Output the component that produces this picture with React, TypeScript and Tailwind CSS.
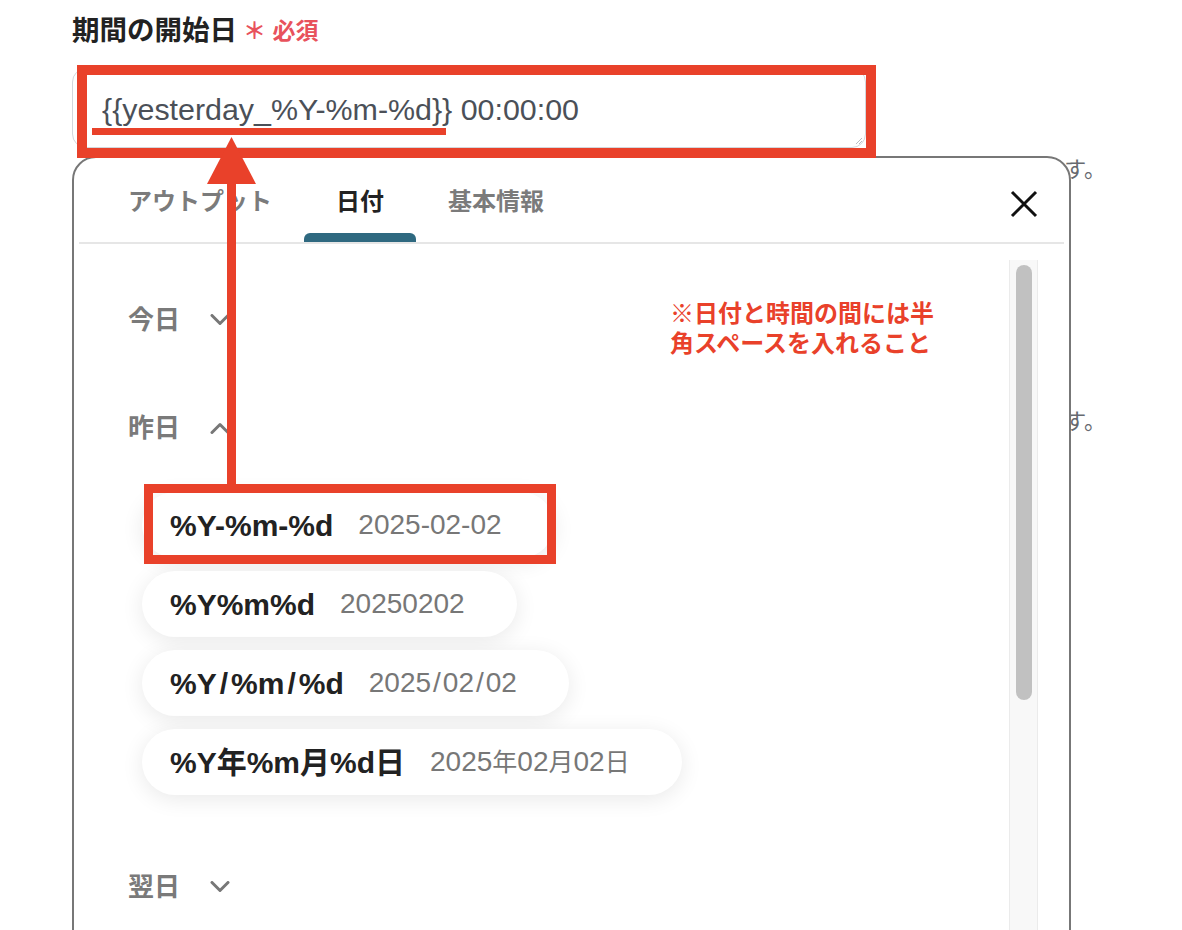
import React from 'react';

const RED = '#e9412a';

const Slash = ({ w }: { w: string }) => <span className={w}>/</span>;
const Kanji = ({ c }: { c: string }) => <span className="text-[25px]">{c}</span>;

const formats: { key: string; fmt: React.ReactNode; sample: React.ReactNode }[] = [
  { key: 'dash', fmt: '%Y-%m-%d', sample: '2025-02-02' },
  { key: 'plain', fmt: '%Y%m%d', sample: '20250202' },
  {
    key: 'slash',
    fmt: (
      <>
        %Y<Slash w="px-[3px]" />%m<Slash w="px-[3px]" />%d
      </>
    ),
    sample: (
      <>
        2025<Slash w="px-[2px]" />02<Slash w="px-[2px]" />02
      </>
    ),
  },
  {
    key: 'kanji',
    fmt: '%Y年%m月%d日',
    sample: (
      <>
        2025<Kanji c="年" />02<Kanji c="月" />02<Kanji c="日" />
      </>
    ),
  },
];

const Chevron = ({ up = false }: { up?: boolean }) => (
  <svg width="20" height="12" viewBox="0 0 20 12" fill="none" className="shrink-0">
    <path
      d={up ? 'M2 10.5L10 2.5L18 10.5' : 'M2 1.5L10 9.5L18 1.5'}
      stroke="#777"
      strokeWidth="3"
      strokeLinecap="round"
      strokeLinejoin="round"
    />
  </svg>
);

const SectionRow = ({ label, open = false, className = '' }: { label: string; open?: boolean; className?: string }) => (
  <div className={`flex h-[40px] items-center gap-[30px] ${className}`}>
    <span className="text-[26px] font-bold text-[#7a7a7a]">{label}</span>
    <Chevron up={open} />
  </div>
);

const FormatChip = ({ fmt, sample }: { fmt: React.ReactNode; sample: React.ReactNode }) => (
  <div className="flex h-[66px] w-fit items-center gap-[25px] rounded-full bg-white pl-[28px] pr-[52px] shadow-[0_4px_22px_rgba(0,0,0,0.09)]">
    <span className="text-[30px] font-bold text-[#222]">{fmt}</span>
    <span className="text-[28px] text-[#777]">{sample}</span>
  </div>
);

const tabs = ['アウトプット', '日付', '基本情報'];

export default function App() {
  return (
    <div className="relative h-[930px] w-[1182px] overflow-hidden bg-white font-['Liberation_Sans','Noto_Sans_CJK_JP',sans-serif]">
      <div className="pl-[72px] pt-[13px]">
        {/* field label */}
        <div className="flex h-[36px] items-center">
          <span className="text-[27.5px] font-bold text-[#222]">期間の開始日</span>
          <span className="ml-[6px] text-[23px] font-bold text-[#e8525c]">＊ 必須</span>
        </div>

        {/* textarea */}
        <div className="relative mt-[19px] flex h-[80px] w-[794px] items-center rounded-[14px] border border-[#d3d7dc] pl-[29px] pt-[3px] text-[30.4px] text-[#4b5058]">
          {'{{yesterday_%Y-%m-%d}} 00:00:00'}
          <svg width="8" height="8" viewBox="0 0 8 8" className="absolute bottom-[2px] right-[2px]">
            <path d="M7 1L1 7M7 4L4 7" stroke="#b9bdc2" strokeWidth="1" />
          </svg>
        </div>

        {/* page content under the dropdown */}
        <div className="relative mt-[8px]">
          <div className="mt-[8px] w-[1034px] text-right text-[22px] leading-[28px] text-[#666a70]">
            日付は「YYYY-MM-DD HH:MM:SS」の形式で入力します。
          </div>
          <div className="mt-[224px] w-[1034px] text-right text-[22px] leading-[28px] text-[#666a70]">
            終了日より前の日時を指定する必要があります。
          </div>

          {/* dropdown panel */}
          <div className="absolute left-0 top-0 z-10 flex h-[820px] w-[999px] flex-col rounded-t-[24px] border-2 border-[#777] bg-white">
            <div className="mx-[5px] flex h-[86px] items-stretch justify-between border-b-2 border-[#e6e6e6]">
              <div className="flex pl-[17px]">
                {tabs.map((t, i) => (
                  <div
                    key={t}
                    className={`relative flex items-center px-8 pt-1 text-[24px] font-bold ${i === 1 ? 'text-[#222]' : 'text-[#7b7b7b]'}`}
                  >
                    {t}
                    {i === 1 && <div className="absolute bottom-0 left-0 right-0 h-[9px] rounded-t-[6px] bg-[#2f6980]" />}
                  </div>
                ))}
              </div>
              <div className="mr-[26px] flex items-center pt-[8px]">
                <svg width="28" height="28" viewBox="0 0 28 28" fill="none">
                  <path d="M2 2L26 26M26 2L2 26" stroke="#111" strokeWidth="3" />
                </svg>
              </div>
            </div>

            <div className="flex flex-1">
              <div className="flex-1 pl-[54px]">
                <SectionRow label="今日" className="mt-[56px]" />
                <SectionRow label="昨日" open className="mt-[68px]" />
                <div className="ml-[14px] mt-[44px] flex flex-col gap-[13px]">
                  {formats.map((f) => (
                    <FormatChip key={f.key} fmt={f.fmt} sample={f.sample} />
                  ))}
                </div>
                <SectionRow label="翌日" className="mt-[72px]" />
              </div>
              {/* scrollbar */}
              <div className="mr-[31px] mt-[16px] w-[29px] border-x border-[#ebebeb] bg-[#f8f8f8]">
                <div className="mx-auto mt-[5px] h-[435px] w-[16px] rounded-full bg-[#c1c1c1]" />
              </div>
            </div>
          </div>
        </div>
      </div>

      {/* annotations */}
      <div className="absolute left-[77px] top-[65px] z-20 h-[93px] w-[799px] border-[10px] border-[#e9412a]" />
      <div className="absolute left-[92px] top-[128px] z-20 h-[7px] w-[354px] bg-[#e9412a]" />
      <div className="absolute left-[144px] top-[484px] z-20 h-[80px] w-[412px] border-[9px] border-[#e9412a]" />
      <svg className="absolute left-0 top-0 z-20" width="1182" height="930" viewBox="0 0 1182 930">
        <polygon points="231.5,137 207,184 256,184" fill={RED} />
        <rect x="227" y="180" width="9" height="306" fill={RED} />
      </svg>
      <div className="absolute left-[670px] top-[299px] z-20 text-[24px] font-bold leading-[30px] text-[#e9412a]">
        ※日付と時間の間には半
        <br />
        角スペースを入れること
      </div>
    </div>
  );
}
